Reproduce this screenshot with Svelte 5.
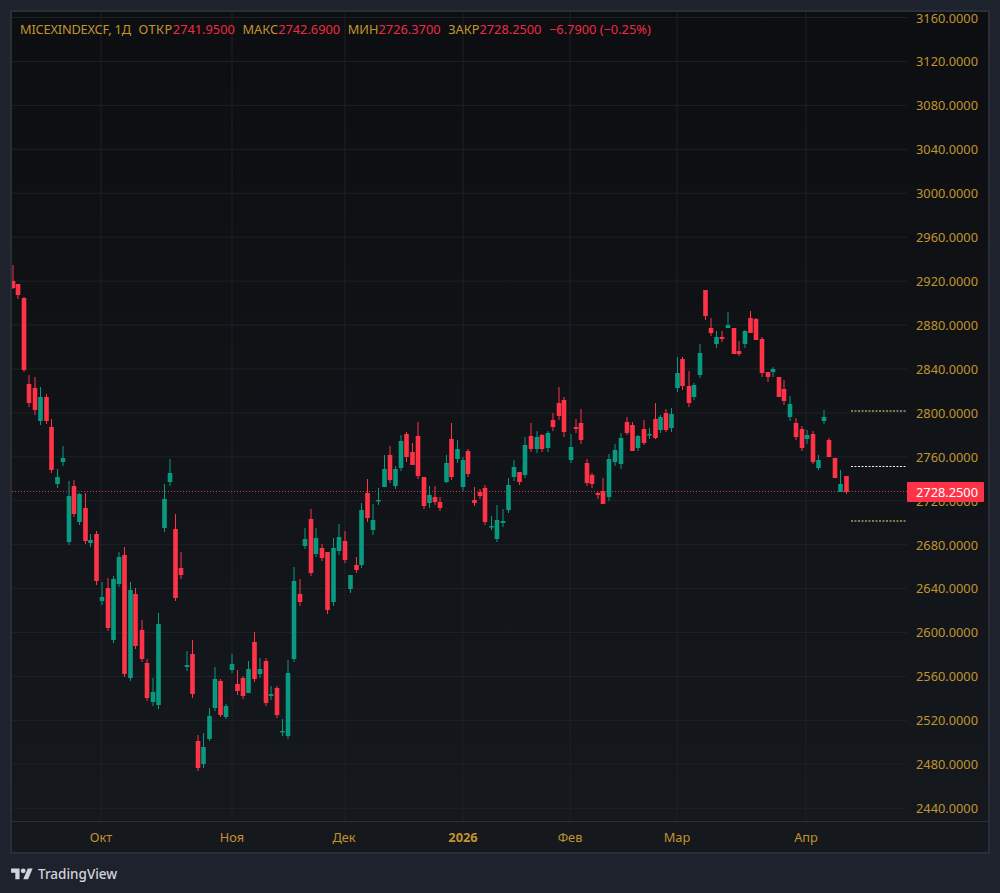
<script>
  const red = '#ff3347'
  const green = '#089981'
  const gridTop = 17.5
  const gridStep = 43.93

  const prices = [3160, 3120, 3080, 3040, 3000, 2960, 2920, 2880, 2840, 2800, 2760, 2720, 2680, 2640, 2600, 2560, 2520, 2480, 2440]
  const gridX = [101, 232, 345, 463, 570, 677, 806]
  const months = [
    { x: 101, label: 'Окт' },
    { x: 232, label: 'Ноя' },
    { x: 344, label: 'Дек' },
    { x: 463, label: '2026', bold: true },
    { x: 570, label: 'Фев' },
    { x: 677, label: 'Мар' },
    { x: 806, label: 'Апр' }
  ]
  const levels = [
    { y: 411, color: '#efe28c' },
    { y: 466.5, color: '#f0f0f0' },
    { y: 521, color: '#f5de6e' }
  ]

  // x, wick top, body top, body bottom, wick bottom, 1 = up (green)
  const candles = [
    [13, 265, 281, 288, 289, 0], [18, 284, 284, 295, 299, 0], [24, 297, 298, 370, 372, 0],
    [29, 375, 384, 403, 407, 0], [35, 377, 388, 410, 415, 0], [40.5, 387, 397, 421, 425, 1],
    [46.5, 394, 397, 421, 424, 0], [51.5, 419, 427, 470, 473, 0], [57.5, 469, 477, 484, 488, 1],
    [63, 446, 458, 462, 466, 1], [69, 481, 496, 542, 545, 1], [74, 480, 486, 514, 517, 0],
    [79.5, 493, 494, 522, 525, 1], [85.5, 493, 508, 541, 544, 0], [90.5, 534, 540, 543, 547, 1],
    [96.5, 531, 534, 581, 585, 0], [102, 582, 597, 601, 605, 1], [108, 578, 588, 628, 631, 0],
    [113.5, 576, 579, 640, 643, 1], [119, 552, 557, 584, 587, 1], [124.5, 547, 555, 674, 677, 0],
    [130.5, 582, 590, 678, 681, 1], [135.5, 588, 594, 646, 649, 0], [142, 620, 630, 659, 662, 0],
    [147, 659, 663, 698, 701, 0], [153, 678, 692, 702, 706, 1], [158.5, 613, 624, 705, 709, 1],
    [164.5, 484, 499, 528, 532, 1], [170, 459, 473, 482, 486, 1], [175.5, 514, 529, 598, 601, 0],
    [181, 552, 568, 575, 579, 0], [187, 651, 665, 667, 671, 1], [192.5, 640, 654, 694, 698, 0],
    [198, 735, 741, 768, 771, 0], [203.5, 733, 747, 764, 768, 1], [209.5, 708, 716, 739, 741, 1],
    [215, 667, 679, 708, 711, 1], [220.5, 679, 681, 715, 717, 0], [226, 704, 706, 717, 719, 1],
    [232, 654, 664, 670, 673, 1], [237.5, 670, 684, 691, 695, 0], [243, 676, 678, 696, 699, 0],
    [248.5, 661, 669, 693, 693, 1], [254.5, 632, 642, 679, 682, 0], [260, 658, 669, 674, 678, 1],
    [266, 658, 661, 703, 706, 0], [271, 686, 694, 696, 700, 1], [277, 686, 688, 715, 718, 0],
    [282.5, 719, 731, 732, 736, 1], [288, 660, 673, 736, 739, 1], [294, 567, 581, 659, 662, 1],
    [300, 579, 594, 602, 606, 0], [305, 528, 539, 546, 549, 1], [311, 509, 519, 573, 576, 0],
    [316, 528, 538, 554, 557, 1], [322, 544, 548, 558, 561, 0], [327.5, 552, 552, 610, 614, 0],
    [333.5, 538, 548, 602, 606, 1], [339, 524, 537, 551, 555, 1], [345, 531, 541, 560, 563, 0],
    [350.5, 575, 575, 589, 593, 1], [356.5, 557, 565, 570, 573, 0], [361.5, 503, 510, 565, 568, 1],
    [367.5, 479, 493, 518, 522, 0], [373, 504, 520, 530, 535, 1], [378.5, 488, 500, 501, 505, 1],
    [384.5, 455, 469, 487, 487, 1], [390, 446, 455, 480, 483, 0], [395.5, 466, 469, 486, 489, 1],
    [401, 435, 441, 468, 471, 1], [406.5, 432, 434, 457, 462, 0], [412.5, 443, 452, 465, 465, 0],
    [418, 422, 436, 476, 479, 0], [424, 477, 477, 506, 509, 0], [429.5, 486, 495, 503, 508, 1],
    [435, 486, 497, 502, 505, 0], [440, 497, 502, 508, 511, 0], [446.5, 455, 463, 482, 483, 1],
    [451.5, 423, 439, 477, 480, 0], [457.5, 440, 449, 459, 463, 1], [463, 457, 460, 487, 491, 1],
    [468, 449, 451, 474, 477, 0], [474.5, 487, 500, 503, 506, 0], [480, 489, 492, 496, 499, 0],
    [485, 485, 488, 522, 525, 0], [491.5, 516, 526, 527, 530, 1], [497, 505, 520, 539, 542, 1],
    [503, 509, 521, 523, 527, 1], [508.5, 478, 485, 510, 513, 1], [514, 460, 467, 477, 481, 1],
    [519.5, 472, 472, 482, 485, 0], [525, 437, 445, 475, 478, 1], [531, 423, 436, 449, 452, 0],
    [537, 431, 437, 449, 453, 1], [542, 434, 435, 449, 452, 0], [548, 431, 433, 448, 452, 1],
    [553, 413, 420, 427, 431, 0], [559, 387, 403, 416, 420, 0], [564, 397, 400, 432, 437, 0],
    [571, 434, 447, 460, 463, 1], [576, 419, 427, 429, 433, 0], [581, 409, 423, 440, 444, 0],
    [587, 459, 463, 483, 486, 0], [592, 473, 475, 484, 488, 0], [598, 492, 493, 495, 499, 0],
    [603, 478, 491, 504, 504, 0], [609, 454, 459, 497, 501, 1], [615, 444, 450, 462, 466, 1],
    [621, 433, 438, 464, 469, 1], [627, 417, 422, 433, 435, 0], [632.5, 422, 425, 451, 451, 0],
    [638, 435, 436, 448, 451, 1], [644, 420, 429, 443, 445, 0], [649.5, 428, 434, 435, 439, 1],
    [655.5, 403, 419, 438, 439, 0], [660.5, 415, 417, 430, 433, 1], [666, 409, 413, 430, 432, 0],
    [671.5, 408, 414, 428, 432, 1], [677.5, 357, 373, 388, 392, 1], [682.5, 357, 359, 386, 390, 0],
    [689, 371, 386, 403, 407, 0], [694, 383, 385, 397, 400, 1], [700, 344, 353, 375, 378, 1],
    [705.5, 290, 290, 316, 320, 0], [711, 318, 328, 333, 336, 0], [716.5, 331, 337, 344, 348, 1],
    [722, 331, 337, 339, 342, 0], [728, 312, 325, 328, 328, 1], [734, 328, 328, 354, 354, 0],
    [739, 341, 351, 354, 356, 0], [745, 330, 331, 344, 348, 1], [750.5, 311, 318, 333, 333, 0],
    [756, 318, 319, 340, 340, 0], [762, 337, 339, 373, 377, 0], [768, 372, 372, 377, 382, 0],
    [773, 367, 369, 372, 377, 1], [779, 377, 377, 397, 397, 0], [784, 380, 389, 401, 405, 0],
    [790, 396, 404, 417, 421, 1], [796, 418, 423, 437, 440, 0], [802, 426, 429, 448, 451, 0],
    [807, 430, 435, 439, 444, 1], [813, 431, 434, 462, 464, 0], [818.5, 455, 460, 468, 470, 1],
    [824, 410, 417, 421, 424, 1], [829, 438, 440, 457, 457, 0], [835, 458, 458, 478, 478, 0],
    [840.5, 470, 484, 492, 492, 1], [846.5, 476, 476, 492, 494, 0]
  ]
</script>

<div class="page">
  <div class="frame">
    <div class="pane">
      <svg width="895" height="809" viewBox="12 12 895 809">
        {#each prices as p, i}
          <line class="grid" x1="12" x2="907" y1={gridTop + i * gridStep} y2={gridTop + i * gridStep} />
        {/each}
        {#each gridX as x}
          <line class="grid" x1={x} x2={x} y1="12" y2="821" />
        {/each}

        <line class="last" x1="12" x2="907" y1="491.5" y2="491.5" />

        {#each levels as l}
          <line class="level" x1="851" x2="907" y1={l.y} y2={l.y} stroke={l.color} />
        {/each}

        {#each candles as [x, wt, bt, bb, wb, up]}
          <line class="wick" x1={x} x2={x} y1={wt} y2={wb} stroke={up ? green : red} />
          <rect x={x - 2.3} y={bt} width="4.6" height={Math.max(bb - bt, 1.5)} fill={up ? green : red} />
        {/each}
      </svg>

      <div class="legend">
        <span class="symbol">MICEXINDEXCF, 1Д</span>
        <span class="open">ОТКР<b>2741.9500</b></span>
        <span>МАКС<b>2742.6900</b></span>
        <span>МИН<b>2726.3700</b></span>
        <span>ЗАКР<b>2728.2500</b></span>
        <b>−6.7900 (−0.25%)</b>
      </div>
    </div>

    <div class="prices">
      {#each prices as p}
        <span>{p}.0000</span>
      {/each}
    </div>

    <div class="tag">2728.2500</div>

    <div class="times">
      {#each months as m}
        <span class:bold={m.bold} style="left: {m.x - 12}px">{m.label}</span>
      {/each}
    </div>
  </div>

  <div class="brand">
    <svg width="22" height="17" viewBox="0 0 36 28" fill="#d1d4dc">
      <path d="M14 22H7V11H0V4h14v18zM28 22h-8l7.5-18h8L28 22z" />
      <circle cx="20" cy="8" r="4" />
    </svg>
    <span>TradingView</span>
  </div>
</div>

<style>
  :global(body) {
    margin: 0;
    background: #1e222d;
  }
  .page {
    box-sizing: border-box;
    width: 1000px;
    height: 893px;
    padding: 10px;
    background: #1e222d;
    font-family: "Noto Sans", sans-serif;
    font-size: 12.8px;
    color: #c0942f;
  }
  .frame {
    position: relative;
    box-sizing: border-box;
    width: 980px;
    height: 844px;
    display: grid;
    grid-template-columns: 895px 1fr;
    grid-template-rows: 809px 1fr;
    border: 2px solid #2a2e39;
    background: linear-gradient(#0c0e11, #15181d);
  }
  .pane {
    position: relative;
    overflow: hidden;
  }
  .pane svg {
    display: block;
  }
  .grid {
    stroke: #1e2126;
    stroke-width: 1;
  }
  .last {
    stroke: #d0394a;
    stroke-width: 1;
    stroke-dasharray: 1 2;
  }
  .level {
    stroke-width: 1.2;
    stroke-dasharray: 2 1.5;
  }
  .wick {
    stroke-width: 1;
  }
  .legend {
    position: absolute;
    top: 8px;
    left: 8px;
    display: flex;
    gap: 7.6px;
    line-height: 18px;
    white-space: nowrap;
  }
  .symbol {
    letter-spacing: -0.18px;
  }
  .open {
    letter-spacing: 0.5px;
  }
  .legend b {
    font-weight: 400;
    letter-spacing: 0;
    color: #f02a42;
  }
  .prices {
    display: flex;
    flex-direction: column;
    gap: 27.93px;
    margin-top: -2.5px;
    padding-left: 9px;
    line-height: 16px;
    height: 0;
  }
  .tag {
    position: absolute;
    left: 895px;
    top: 470px;
    width: 77px;
    height: 20px;
    box-sizing: border-box;
    padding-left: 9px;
    line-height: 20px;
    background: #ff3347;
    border-radius: 1px;
    color: #fff;
  }
  .times {
    grid-column: 1 / 3;
    position: relative;
    border-top: 1px solid #2a2e39;
  }
  .times span {
    position: absolute;
    top: 6px;
    transform: translateX(-50%);
    line-height: 18px;
  }
  .bold {
    font-weight: 700;
  }
  .brand {
    display: flex;
    align-items: center;
    gap: 5px;
    margin-top: 10px;
    margin-left: 1px;
    color: #d1d4dc;
    font-size: 13.5px;
    font-weight: 500;
    line-height: 20px;
  }
  .brand svg {
    display: block;
  }
</style>
